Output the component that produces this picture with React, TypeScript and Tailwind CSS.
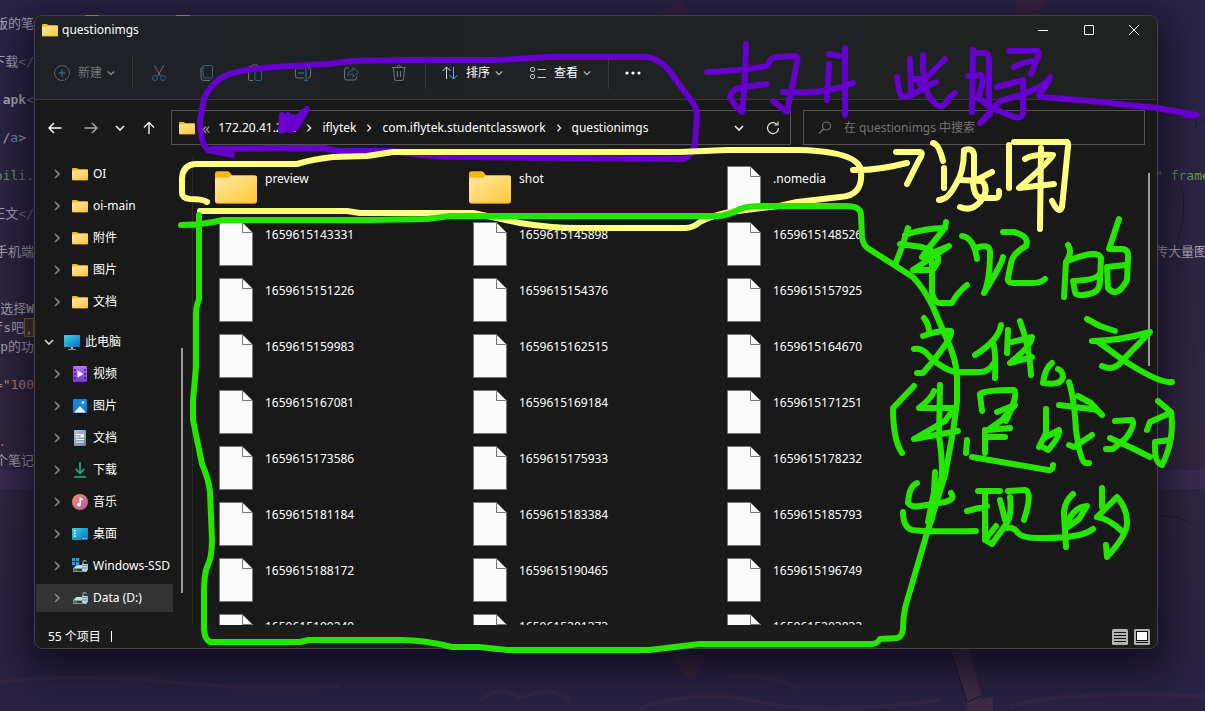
import React from "react";

const uiFont = "font-['Noto_Sans','Noto_Sans_CJK_SC',sans-serif]";
const codeFont = "font-['DejaVu_Sans_Mono','Noto_Sans_CJK_SC',monospace]";

type Kind = "folder" | "pc" | "video" | "picture" | "doc" | "download" | "music" | "desktop" | "ssd" | "drive";

function FolderIcon({ size = 16 }: { size?: number }) {
  return (
    <svg width={size} height={size} viewBox="0 0 16 16" className="shrink-0">
      <defs>
        <linearGradient id="folderFace" x1="0" y1="0" x2="1" y2="1">
          <stop offset="0" stopColor="#ffe9a6" />
          <stop offset="1" stopColor="#ffc736" />
        </linearGradient>
      </defs>
      <path d="M0 3q0-1 1-1h3.6q.6 0 .9.4L6.6 3.6H15q1 0 1 1V8H0z" fill="#fab815" />
      <path d="M0 5.1q0-.6.7-.6H5.2l1.2-.9H15.4q.6 0 .6.8v9q0 .8-.8.8H.8q-.8 0-.8-.8z" fill="url(#folderFace)" />
      <path d="M.3 13.9q.2.3.6.3h14.2q.4 0 .6-.3" fill="none" stroke="#e59a19" strokeWidth=".35" />
    </svg>
  );
}

function FileIcon() {
  return (
    <svg width="42" height="44" viewBox="0 0 42 44" className="shrink-0">
      <path d="M4.5.5h23l10 10v33h-33z" fill="#fafafa" stroke="#777" />
      <path d="M27.500.5v10h10z" fill="#fafafa" stroke="#777" />
      <path d="M28.500 0l10 10V0z" fill="#191919" />
    </svg>
  );
}

function Drive() {
  return (
    <g>
      <path d="M4.500 7h8l2.500 3.500H1z" fill="#d5d9dd" />
      <rect x="1" y="10" width="14" height="4" rx="1" fill="#8f969d" />
      <rect x="2" y="11" width="8" height="2" fill="#34393d" />
      <rect x="3" y="11.500" width="2" height="1" fill="#2bdc3a" />
      <path d="M11 6V4.200a1.700 1.700 0 0 1 3.300-.5" fill="none" stroke="#9ba2a8" strokeWidth="1.200" />
      <path d="M10 6h6v5.500l-1.500 2h-3l-1.500-2z" fill="#c5ccd2" />
      <path d="M10 7.500h6M10 10h6" stroke="#4aa3da" strokeWidth="1" />
    </g>
  );
}

function NavIcon({ kind }: { kind: Kind }) {
  if (kind === "folder") return <FolderIcon />;
  return (
    <svg width="16" height="16" viewBox="0 0 16 16" className="shrink-0">
      <defs>
        <linearGradient id="cyan" x1="0" y1="0" x2="1" y2="1">
          <stop offset="0" stopColor="#36d8e5" />
          <stop offset="1" stopColor="#0a6dc0" />
        </linearGradient>
        <linearGradient id="violet" x1="0" y1="0" x2="0" y2="1">
          <stop offset="0" stopColor="#b974f2" />
          <stop offset="1" stopColor="#7436d8" />
        </linearGradient>
        <linearGradient id="coral" x1="0" y1="0" x2="1" y2="1">
          <stop offset="0" stopColor="#f7905b" />
          <stop offset="1" stopColor="#a75bb8" />
        </linearGradient>
        <linearGradient id="steel" x1="0" y1="0" x2="1" y2="1">
          <stop offset="0" stopColor="#b5c7da" />
          <stop offset="1" stopColor="#6c8199" />
        </linearGradient>
      </defs>
      {kind === "pc" && (
        <>
          <rect y="1" width="16" height="12" rx=".6" fill="url(#cyan)" />
          <path d="M7 13h2v2h3v.8H4V15h3z" fill="#b6bcc2" />
        </>
      )}
      {kind === "video" && (
        <>
          <rect x="1" width="14" height="16" rx="1.200" fill="url(#violet)" />
          <path d="M2.200 3h1.600v2H2.200zm0 4h1.600v2H2.200zm0 4h1.600v2H2.200zM12.200 3h1.600v2h-1.600zm0 4h1.600v2h-1.600zm0 4h1.600v2h-1.600z" fill="#3b1a80" />
          <path d="M5.500 4.500l6 3.500-6 3.500z" fill="#fff" />
        </>
      )}
      {kind === "picture" && (
        <>
          <rect x="1" y="1" width="14" height="14" rx="1.200" fill="#1685d8" />
          <path d="M2.500 14.200L8 8l5.500 6.200q-.3.300-1 .3h-9q-.7 0-1-.3z" fill="#f3fbff" />
          <circle cx="11" cy="4.500" r="1.300" fill="#fff" />
        </>
      )}
      {kind === "doc" && (
        <>
          <rect x="2" width="12" height="16" rx="1.200" fill="url(#steel)" />
          <path d="M4 4.500h4M4 7h3.500M4 9.500h8M4 12h8" stroke="#fff" strokeWidth="1.100" />
          <rect x="8.500" y="4" width="3.500" height="3.500" fill="#fff" />
        </>
      )}
      {kind === "download" && (
        <>
          <path d="M8 0v11M3.500 6.800L8 11.300l4.500-4.500" fill="none" stroke="#20b18f" strokeWidth="1.600" />
          <path d="M2 15h12" stroke="#19a583" strokeWidth="1.700" />
        </>
      )}
      {kind === "music" && (
        <>
          <circle cx="8" cy="8" r="8" fill="url(#coral)" />
          <path d="M8.200 3.500v6.700M8.200 4l2.500 1.800" stroke="#fff" strokeWidth="1.400" fill="none" />
          <circle cx="6.900" cy="10.600" r="1.900" fill="#fff" />
        </>
      )}
      {kind === "desktop" && (
        <>
          <rect y="2" width="16" height="12" rx="1" fill="url(#cyan)" />
          <path d="M2 4h1.500v1.500H2zm0 2.800h1.500v1.500H2zm0 2.700h1.500V11H2z" fill="#fff" />
          <path d="M11 12.500h1.300M13.500 12.500h1.300" stroke="#bdeaff" />
        </>
      )}
      {kind === "drive" && <Drive />}
      {kind === "ssd" && (
        <>
          <Drive />
          <path d="M0 0h3.300v3.300H0zm4 0h3.300v3.300H4zM0 4h3.300v3.300H0zm4 0h3.300v3.300H4z" fill="#1b9be8" />
        </>
      )}
    </svg>
  );
}

function Chevron({ dir, color = "#e8e8e8", size = 10 }: { dir: "down" | "right"; color?: string; size?: number }) {
  return (
    <svg width={size} height={size} viewBox="0 0 10 10" className="shrink-0" fill="none" stroke={color} strokeWidth="1.700">
      <path d={dir === "down" ? "M1 3l4 4 4-4" : "M3 1l4 4-4 4"} />
    </svg>
  );
}

const gray = "#6f7071";
const blue = "#2f6280";

const tools: { label: string; art: React.ReactNode }[] = [
  {
    label: "剪切",
    art: (
      <>
        <path d="M4 1l6.500 11M14 1L7.500 12" stroke={gray} />
        <circle cx="5" cy="14" r="2.500" stroke={blue} />
        <circle cx="13" cy="14" r="2.500" stroke={blue} />
      </>
    ),
  },
  {
    label: "复制",
    art: (
      <>
        <path d="M4.500 3Q3 3.500 3 5v9q0 2.500 2.500 2.500H11q1.300 0 1.800-1" stroke={gray} />
        <rect x="5" y="1.500" width="9.500" height="12.500" rx="1.500" stroke={blue} />
      </>
    ),
  },
  {
    label: "粘贴",
    art: (
      <>
        <path d="M6 2.500H3.500q-1 0-1 1v12q0 1 1 1H7M12 2.500q1.500 0 1.500 1.500" stroke={gray} />
        <rect x="6" y="1" width="6" height="2.500" rx="1" stroke={gray} />
        <rect x="9" y="6" width="6.500" height="10.500" rx="1" stroke={blue} />
      </>
    ),
  },
  {
    label: "重命名",
    art: (
      <>
        <path d="M9.500 4H3.500Q1.500 4 1.500 6v6q0 2 2 2h6M14 4q2.500 0 2.500 2v6q0 2-2.500 2" stroke={gray} />
        <path d="M4 9h6M12 2v14.500M10 16.500h4M10 1.500h4" stroke={blue} strokeWidth="1.300" />
      </>
    ),
  },
  {
    label: "共享",
    art: (
      <>
        <path d="M7 4H4.500q-2 0-2 2v8q0 2 2 2h8q2 0 2-2v-1.500" stroke={gray} />
        <path d="M5.500 11.500Q6 6.500 11 6.500V3.500l5.500 4.700-5.500 4.700V10Q7.500 9.500 5.500 11.500z" stroke={blue} />
      </>
    ),
  },
  {
    label: "删除",
    art: <path d="M2 3.500h14M7 3.500Q7 1.500 9 1.500t2 2M3.500 3.500l1 11.500q.2 1.500 1.500 1.500h6q1.300 0 1.500-1.500l1-11.500M7.500 7v6M10.500 7v6" stroke={gray} />,
  },
];

const folders: { name: string; kind: Kind }[] = ["OI", "oi-main", "附件", "图片", "文档"].map((name) => ({ name, kind: "folder" }));

const places: { name: string; kind: Kind }[] = [
  { name: "视频", kind: "video" },
  { name: "图片", kind: "picture" },
  { name: "文档", kind: "doc" },
  { name: "下载", kind: "download" },
  { name: "音乐", kind: "music" },
  { name: "桌面", kind: "desktop" },
  { name: "Windows-SSD", kind: "ssd" },
  { name: "Data (D:)", kind: "drive" },
];

const files = [
  "preview", "shot", ".nomedia",
  "1659615143331", "1659615145898", "1659615148526",
  "1659615151226", "1659615154376", "1659615157925",
  "1659615159983", "1659615162515", "1659615164670",
  "1659615167081", "1659615169184", "1659615171251",
  "1659615173586", "1659615175933", "1659615178232",
  "1659615181184", "1659615183384", "1659615185793",
  "1659615188172", "1659615190465", "1659615196749",
  "1659615199249", "1659615201373", "1659615203832",
];

function NavRow({ name, kind }: { name: string; kind: Kind }) {
  const selected = name === "Data (D:)";
  return (
    <li className="h-8 py-0.5">
      <button className={`flex h-7 w-full items-center overflow-hidden pl-4 text-left ${selected ? "bg-[#333333]" : ""}`}>
        <Chevron dir="right" color="#858585" />
        <span className="ml-2.5 flex items-center gap-[5px]">
          <NavIcon kind={kind} />
          <span className="whitespace-nowrap">{name}</span>
        </span>
      </button>
    </li>
  );
}

/* Visible ends of the editor lines, keyed by line number. */
const leftCode: Record<number, React.ReactNode> = {
  0: "版的笔",
  2: <>下载<i className="not-italic text-[#77768a]">&lt;/</i></>,
  4: <><b>apk</b><i className="not-italic text-[#77768a]">&lt;</i></>,
  6: <span className="mr-2">/<i className="not-italic text-[#5b97cf]">a</i>&gt;</span>,
  8: <span className="text-[#6b9a5c]">pili.</span>,
  10: <>正文<i className="not-italic text-[#77768a]">&lt;/</i></>,
  12: "手机端",
  15: <>选择<b>W</b></>,
  16: <>fs吧<i className="border border-[#8a741f] bg-[#453a2b] not-italic">,</i></>,
  17: <>tp的功</>,
  19: <span className="text-[#bd8772]">="100</span>,
  22: <span className="mr-7 text-[#bd6a5a]">.</span>,
  23: "个笔记",
};

const rightCode: Record<number, React.ReactNode> = {
  8: <span className="text-[#6b9a5c]">" frame</span>,
  12: "传大量图",
};

const lines = Array.from({ length: 36 }, (_, i) => i);

function EditorBackdrop() {
  return (
    <div aria-hidden="true" className={`absolute inset-0 overflow-hidden bg-linear-to-b from-[#2a2446] via-[#31273f] via-65% to-[#282142] pt-3.5 text-[13px] text-[#aaa8b4] ${codeFont}`}>
      <svg className="absolute inset-0 h-full w-full" viewBox="0 0 1205 711" preserveAspectRatio="none" fill="none">
        <path d="M652 15l30-14 6 14zM1016 0h30l-9 15h-21z" fill="#3e2440" opacity=".7" />
        <path d="M950 648l17 54-2 9h28v-14l-10 2-15-51z" fill="#3d2b45" />
        <path d="M950 648l17 54 14-6" stroke="#1d172c" />
        <path d="M1178 238q10-30 3-53M1160 516q20 0 30 7M1198 115l-3 13 10-10" stroke="#1f1930" />
        <path d="M673 655q3 15 18 25 14-12 14-25z" fill="#38243a" />
        <path d="M0 682q80-9 170 0t170 4M480 700q20-16 40-2 30-14 50 2M730 676q50 0 70 13M640 708q60-20 120-6t180-2M1010 706q60-16 195-10" stroke="#3b2a43" strokeWidth="4" opacity=".5" />
      </svg>
      {lines.map((n) => (
        <div key={n} className={`relative flex h-[19px] justify-between leading-[19px] whitespace-nowrap ${n === 24 ? "bg-[#392d50]" : ""}`}>
          <span className="flex w-[34px] shrink-0 justify-end overflow-hidden">
            <span className="flex">{leftCode[n]}</span>
          </span>
          <span className="w-[50px] shrink-0 overflow-hidden">{rightCode[n]}</span>
        </div>
      ))}
    </div>
  );
}

const purpleInk = [
  "M232 155L212 149L323 148Q335 151 345 151H393Q430 157 463 157L683 159Q692 156 695 144L697 115Q697 107 690 99L668 69Q657 58 647 57H547L500 60H400L353 61L327 64L273 67Q240 70 227 75Q210 83 204 99L200 120Q200 143 208 150L232 155",
  "M282 115L281 131L288 115L284 130L307 109L296 128L289 130L293 117L286 127L300 117L285 125",
  "M707 72Q740 71 767 66",
  "M746 44Q745 90 742 112Q735 107 730 97Q732 88 744 87L767 84",
  "M769 63Q770 57 779 57L796 56Q799 58 796 67L787 112L773 101",
  "M783 92Q825 95 853 83",
  "M829 54L839 56M829 64L827 100M845 48V115",
  "M897 77Q899 96 903 97Q912 97 923 88L936 82M910 59L911 91M911 79H923M945 59L920 84",
  "M923 55Q922 80 928 95Q938 110 944 105Q949 97 955 93",
  "M973 50L972 112M975 53H986Q989 54 989 61V98L990 114L980 123L1000 101Q1045 89 1050 77Q1046 87 1042 91Q1037 96 1041 97L1090 101L1157 108L1197 115H1186",
  "M968 76L981 75Q986 77 978 98L992 108L1014 117Q1023 119 1023 112V80L997 87",
  "M1009 51H1038Q1040 53 1037 59L1031 74M1014 67Q1025 61 1035 61",
];

const yellowInk = [
  "M207 202Q203 199 190 199Q182 198 182 193V178Q183 165 195 164H297Q314 159 333 157L367 156L393 152H680L727 150H800Q861 152 861 172Q863 196 840 197L797 202L779 206L730 212Q710 216 700 222Q693 228 685 228H577Q550 228 520 223L473 213L360 213L347 211H200",
  "M853 170Q875 171 907 163M896 152H920Q924 153 919 160L907 184",
  "M933 143Q939 144 943 161M944 168V188M939 200Q948 200 956 184Q964 172 964 150Q973 147 974 155V180",
  "M960 180L982 181Q990 190 980 202Q971 212 960 207M992 172L973 182Q974 198 982 198L995 198Q1000 198 999 191",
  "M1009 145V188M1014 142H1065Q1069 141 1068 147L1062 207Q1059 215 1052 201M1041 148L1040 229",
  "M1025 159Q1032 154 1053 155Q1051 160 1019 188L1054 184",
];

const greenInk = [
  "M181 225Q202 225 223 220H367L427 219L450 216H717Q727 216 740 209Q747 206 765 206H843Q860 205 861 214L862 237Q863 246 869 249L913 277Q925 290 933 307L945 335Q957 360 957 378V402L953 432L945 475L927 533L905 608Q903 618 903 629Q902 637 897 638L880 639Q877 644 872 644H700L649 650H507L479 647H452Q425 640 401 640H309L300 642H211Q205 641 204 629V593Q204 575 207 567Q212 558 212 540L210 492Q209 480 202 464L193 420V400L196 367V313Q196 307 199 299V215",
  "M908 228L902 247L895 265M905 235Q925 228 945 228L946 222M945 228L927 250L922 257L949 246L913 270L933 270L938 262V257M900 244L922 247L932 251",
  "M932 262V292Q934 303 940 303H952Q957 293 967 285",
  "M962 236Q974 238 977 259M975 248Q990 243 990 252Q990 280 984 293Q1002 264 1003 257M1003 232H1014Q1030 236 1026 246Q1013 253 1011 263L1008 278Q1007 283 1013 283H1032Q1041 283 1045 279",
  "M1068 245Q1073 252 1066 262L1064 297M1070 260Q1098 249 1101 258L1100 281Q1100 292 1089 294Q1076 297 1075 292L1073 281Q1098 280 1100 273",
  "M1119 219L1109 249H1123Q1129 250 1128 258L1127 280Q1117 299 1108 288L1107 267L1125 265",
  "M924 318Q928 323 929 330M923 336Q940 330 951 331Q954 337 923 373H917M914 349Q922 347 930 357Q945 371 957 372H980Q989 372 994 363",
  "M1001 325Q999 340 975 355M993 343Q996 350 995 378M1008 330L1007 353M1020 321Q1030 348 1031 375M1012 342L1032 337Q1032 345 1010 363L1032 357",
  "M1052 363Q1045 368 1043 383Q1061 386 1063 377Q1063 371 1058 369",
  "M1087 319L1100 326L1115 331M1092 341Q1118 341 1150 332L1123 360Q1114 372 1102 366M1097 341L1123 360Q1160 384 1172 382",
  "M914 386L893 408Q893 440 902 453M934 391Q932 398 919 408L953 408M940 385L939 437Q942 452 942 475L931 522M953 410L945 421L914 439L958 431",
  "M980 395L982 411M980 394Q985 390 1014 390Q1019 393 1006 421M997 412L1015 405L1002 420L988 430L1010 428M1005 437H985M985 430V453M967 440L966 453M972 457L1048 470Q1053 471 1053 465",
  "M1059 405L1091 409Q1097 409 1102 415L1091 403L1078 396M1069 382Q1074 397 1076 430Q1080 460 1085 463H1089M1092 435L1074 447L1069 445M1046 409V433L1039 447M1044 438L1059 430Q1060 437 1048 450L1041 446",
  "M1115 421L1132 420Q1136 424 1126 438L1113 449H1106M1110 438L1132 448L1150 457M1158 401L1171 412Q1175 440 1162 465Q1154 463 1155 442L1170 440M1170 413L1150 422L1147 430",
  "M917 483Q909 486 908 503Q912 508 920 506L945 502Q956 499 951 493M935 472L934 492L928 522M903 512Q903 527 912 530Q923 532 976 531",
  "M978 491H1000M985 495V540L996 526M967 511L987 506M1008 491L1025 490Q1033 492 1024 520M1000 500L1005 520M1010 497Q1012 514 1007 523L992 544L985 540M1007 528Q1014 527 1018 533Q1023 538 1037 538Q1080 539 1093 529",
  "M1073 494Q1064 502 1064 514L1066 547M1067 523Q1074 507 1087 506L1079 519L1068 527M1102 488V507M1097 517L1117 497Q1127 508 1127 522Q1128 534 1107 557L1106 545M1097 517Q1108 518 1123 532",
];

function Ink() {
  return (
    <svg
      aria-hidden="true"
      width="1205"
      height="711"
      viewBox="0 0 1205 711"
      className="pointer-events-none absolute top-0 left-0 max-w-none"
      fill="none"
      strokeWidth="6"
      strokeLinecap="round"
      strokeLinejoin="round"
    >
      <path d="M85 15.500h14M176 15.500h14" stroke="#8f7a35" strokeWidth="1" strokeLinecap="butt" />
      <g stroke="#6600cc">{purpleInk.map((d) => <path key={d} d={d} />)}</g>
      <g stroke="#ffff80">{yellowInk.map((d) => <path key={d} d={d} />)}</g>
      <g stroke="#26e600">{greenInk.map((d) => <path key={d} d={d} />)}</g>
    </svg>
  );
}

function Separator() {
  return <span className="h-8 w-px bg-[#39393a]" />;
}

export default function App() {
  return (
    <div className={`relative flex h-screen flex-col overflow-hidden pt-[15px] pr-[47px] pb-[62px] pl-[34px] text-xs text-white ${uiFont}`}>
      <EditorBackdrop />

      <main className="relative flex min-h-0 flex-1 flex-col overflow-hidden rounded-lg border border-[#454348] bg-[#191919] shadow-[0_12px_36px_10px_rgba(8,5,20,0.65)]">
        <header className="flex h-[83px] shrink-0 flex-col bg-[#202124] bg-linear-to-r from-[#1e2126] to-[#202221]">
          <div className="flex h-7 items-center justify-between pr-px pl-[7px]">
            <h1 className="flex items-center gap-1">
              <FolderIcon />
              questionimgs
            </h1>
            <div className="flex h-full">
              <button aria-label="最小化" className="flex w-[46px] items-center justify-center">
                <svg width="10" height="10"><path d="M0 5.500h10" stroke="#fff" /></svg>
              </button>
              <button aria-label="最大化" className="flex w-[45px] items-center justify-center">
                <svg width="10" height="10"><rect x=".5" y=".5" width="9" height="9" rx=".5" fill="none" stroke="#fff" /></svg>
              </button>
              <button aria-label="关闭" className="flex w-[45px] items-center justify-center">
                <svg width="10" height="10"><path d="M0 0l10 10M10 0L0 10" stroke="#fff" /></svg>
              </button>
            </div>
          </div>

          <div className="flex h-[55px] items-center pt-0.5 pl-[19px]">
            <button className="flex h-8 w-[78px] items-center text-[#76777a]">
              <svg width="16" height="16" viewBox="0 0 16 16" fill="none">
                <circle cx="8" cy="8" r="7.500" stroke="#606164" />
                <path d="M8 4.500v7M4.500 8h7" stroke="#3b7ba3" />
              </svg>
              <span className="mr-[5px] ml-2">新建</span>
              <Chevron dir="down" color="#8b8b8b" size={8} />
            </button>
            <Separator />
            <div className="flex px-0.5">
              {tools.map((t) => (
                <button key={t.label} aria-label={t.label} className="flex h-8 w-12 items-center justify-center">
                  <svg width="18" height="18" viewBox="0 0 18 18" fill="none">{t.art}</svg>
                </button>
              ))}
            </div>
            <Separator />
            <button className="ml-4 flex h-8 w-[88px] items-center">
              <svg width="16" height="16" viewBox="0 0 16 16" fill="none">
                <path d="M4.500 14V2M.5 6l4-4 4 4" stroke="#d8d8d8" />
                <path d="M11.500 2v12M7.500 10l4 4 4-4" stroke="#4cb8ef" />
              </svg>
              <span className="mr-[5px] ml-2">排序</span>
              <Chevron dir="down" color="#a0a0a0" size={8} />
            </button>
            <button className="flex h-8 w-[78px] items-center">
              <svg width="16" height="16" viewBox="0 0 16 16" fill="none" stroke="#c9c9c9">
                <rect x=".5" y="2.500" width="4" height="4" rx="1.500" />
                <rect x=".5" y="9.500" width="4" height="4" rx="1.500" />
                <path d="M7.500 4.500H16M7.500 12.500H16" />
              </svg>
              <span className="mr-[5px] ml-2">查看</span>
              <Chevron dir="down" color="#a0a0a0" size={8} />
            </button>
            <Separator />
            <button aria-label="更多" className="flex h-8 w-12 items-center justify-center">
              <svg width="16" height="4" fill="#fff">
                <circle cx="2" cy="2" r="1.600" /><circle cx="8" cy="2" r="1.600" /><circle cx="14" cy="2" r="1.600" />
              </svg>
            </button>
          </div>
        </header>

        <div className="flex h-[59px] shrink-0 items-start border-t border-[#38383a] pt-2.5 pr-3">
          <div className="flex h-[35px] w-[136px] shrink-0 items-center pl-[13px]">
            <button aria-label="后退" className="mr-[22px]">
              <svg width="14" height="12" fill="none" stroke="#fff" strokeWidth="1.500" className="block"><path d="M13.500 6H1.500M6 1L1 6l5 5" /></svg>
            </button>
            <button aria-label="前进" className="mr-[17px]">
              <svg width="14" height="12" fill="none" stroke="#a5a5a5" strokeWidth="1.500" className="block"><path d="M.5 6h12M8 1l5 5-5 5" /></svg>
            </button>
            <button aria-label="最近的位置" className="mr-[18px]"><Chevron dir="down" /></button>
            <button aria-label="向上">
              <svg width="12" height="14" fill="none" stroke="#f0f0f0" strokeWidth="1.400" className="block"><path d="M6 13V1.500M1 6.500l5-5 5 5" /></svg>
            </button>
          </div>
          <nav aria-label="地址" className="flex h-[35px] min-w-0 flex-1 items-center border border-[#535353] pl-[7px]">
            <FolderIcon />
            <span className="mr-2 ml-[7px] text-base leading-4 text-[#9b9b9b]">«</span>
            <ol className="flex flex-1 items-center">
              {["172.20.41.232", "iflytek", "com.iflytek.studentclasswork", "questionimgs"].map((p, i) => (
                <li key={p} className="flex items-center">
                  {i > 0 && <span className="flex w-[26px] justify-center"><Chevron dir="right" size={8} /></span>}
                  <a href="#">{p}</a>
                </li>
              ))}
            </ol>
            <button aria-label="历史记录" className="flex w-[34px] justify-center"><Chevron dir="down" /></button>
            <button aria-label="刷新" className="flex w-[34px] justify-center">
              <svg width="14" height="14" viewBox="0 0 14 14" fill="none" stroke="#e4e4e4" strokeWidth="1.200"><path d="M12.500 7A5.500 5.500 0 1 1 10.700 3M12 .5V4H8.500" /></svg>
            </button>
          </nav>
          <label className="ml-3 flex h-[35px] w-[342px] shrink-0 items-center border border-[#535353] pl-3.5">
            <svg width="14" height="14" viewBox="0 0 14 14" fill="none" stroke="#777b7b" strokeWidth="1.100"><circle cx="8.500" cy="5" r="4" /><path d="M5.500 8L1 12.500" /></svg>
            <input type="search" aria-label="搜索" placeholder="在 questionimgs 中搜索" className="ml-3 min-w-0 flex-1 bg-transparent outline-none placeholder:text-[#757575]" />
          </label>
        </div>

        <div className="flex min-h-0 flex-1">
          <nav aria-label="导航窗格" className="w-[138px] shrink-0 overflow-hidden pl-px">
            <ul>{folders.map((f) => <NavRow key={f.name} {...f} />)}</ul>
            <button className="mt-2 flex h-8 items-center pl-2">
              <Chevron dir="down" color="#cfcfcf" />
              <span className="ml-2.5 flex items-center gap-[5px]"><NavIcon kind="pc" />此电脑</span>
            </button>
            <ul>{places.map((p) => <NavRow key={p.name} {...p} />)}</ul>
          </nav>
          <div className="flex w-5 shrink-0 justify-between border-r border-[#2b2b2b] pt-[190px] pb-8 pl-2">
            <span className="w-0.5 bg-[#9a9a9a]" />
          </div>
          <ul aria-label="文件" className="grid min-w-0 flex-1 auto-rows-[56px] grid-cols-[repeat(3,254px)] content-start overflow-hidden pt-0.5 pl-[22px]">
            {files.map((name, i) => (
              <li key={name} className="flex h-14 gap-2 pt-1.5">
                {i < 2 ? <FolderIcon size={42} /> : <FileIcon />}
                <span className="mt-1 leading-[18px]">{name}</span>
              </li>
            ))}
          </ul>
          <div className="flex w-[9px] shrink-0 pt-[15px]">
            <span className="h-[193px] w-0.5 bg-[#9a9a9a]" />
          </div>
        </div>

        <footer className="flex h-[23px] shrink-0 items-center justify-between bg-[#1c1c1c] pr-[7px] pl-[13px]">
          <p className="flex items-center gap-2.5">55 个项目<span className="h-[11px] w-px bg-white" /></p>
          <div className="flex gap-1.5">
            <button aria-label="详细信息">
              <svg width="16" height="16" className="block"><rect width="16" height="16" rx="1.500" fill="#b3b3b3" /><path d="M2 3.500h12M2 6.500h12M2 9.500h12M2 12.500h12" stroke="#111" /></svg>
            </button>
            <button aria-label="大图标">
              <svg width="16" height="16" className="block"><rect width="16" height="16" rx="1.500" fill="#b3b3b3" /><rect x="2.500" y="2.500" width="11" height="9" fill="#fff" stroke="#111" /><path d="M2 13.500h12" stroke="#111" /></svg>
            </button>
          </div>
        </footer>
      </main>

      <Ink />
    </div>
  );
}
